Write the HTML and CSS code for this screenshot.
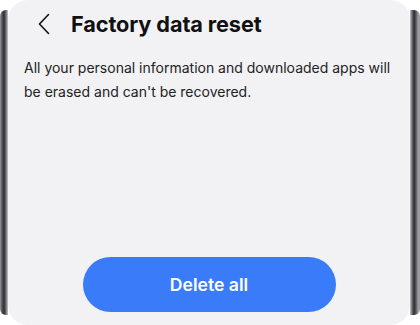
FILE: index.html
```html
<!DOCTYPE html>
<html>
<head>
<meta charset="utf-8">
<link rel="stylesheet" href="styles.css">
</head>
<body>
<div class="phone">
  <div class="bezel bezel-left"></div>
  <div class="screen">
    <header class="appbar">
      <svg class="back" width="12" height="22" viewBox="0 0 12 22"><path d="M10.5 1.5 L1.5 11 L10.5 20.5" fill="none" stroke="#111" stroke-width="1.6" stroke-linecap="round" stroke-linejoin="round"/></svg>
      <h1 class="title">Factory data reset</h1>
    </header>
    <p class="desc"><span class="line">All your personal information and downloaded apps will</span> <span class="line">be erased and can't be recovered.</span></p>
    <div class="spacer"></div>
    <div class="actions">
      <button class="btn">Delete all</button>
    </div>
  </div>
  <div class="bezel bezel-right"></div>
</div>
</body>
</html>
```

FILE: styles.css
```css
html, body {
  margin: 0;
  padding: 0;
  background: #ffffff;
}
body {
  width: 420px;
  height: 325px;
  overflow: hidden;
  font-family: Inter, "Noto Sans", sans-serif;
}
.phone {
  display: flex;
  height: 325px;
  align-items: stretch;
}
.bezel {
  width: 8px;
  margin: 10px 0 10px;
  flex: none;
}
.bezel-left {
  background: linear-gradient(to right, #9a9aa0 0, #55555c 2px, #2c2c31 4px, #6d6d74 6px, #c8c8cc 8px);
  border-radius: 6px 0 0 6px;
}
.bezel-right {
  background: linear-gradient(to right, #c8c8cc 0, #6d6d74 2px, #2c2c31 4px, #55555c 6px, #9a9aa0 8px);
  border-radius: 0 6px 6px 0;
  width: 10px;
}
.screen {
  flex: 1;
  min-width: 0;
  background: #f2f2f4;
  border-radius: 20px;
  display: flex;
  flex-direction: column;
}
.appbar {
  display: flex;
  align-items: center;
  height: 48px;
  padding-left: 30px;
}
.back {
  margin-right: 21px;
}
.title {
  margin: 0;
  font-size: 21.7px;
  font-weight: 700;
  color: #111;
  letter-spacing: -0.1px;
}
.desc {
  margin: 8px 0 0 16px;
  font-size: 14px;
  line-height: 24px;
  color: #222;
}
.line {
  display: block;
  white-space: nowrap;
}
.spacer {
  flex: 1;
}
.actions {
  display: flex;
  justify-content: center;
  padding-bottom: 13px;
}
.btn {
  width: 253px;
  height: 55px;
  border: none;
  border-radius: 28px;
  background: #3a7bfa;
  color: #fff;
  font-family: Inter, "Noto Sans", sans-serif;
  font-size: 17.6px;
  font-weight: 600;
}
```
